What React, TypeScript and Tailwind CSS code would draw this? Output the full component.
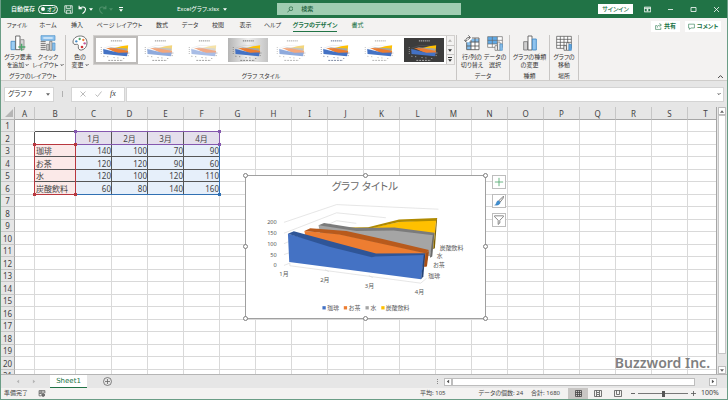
import React from 'react';

type Variant = {
  id: string;
  bg: string;
  ink: string;
  colors: string[];
  selected?: boolean;
};

const OFFICE = ['#4472c4', '#ed7d31', '#a5a5a5', '#ffc000'];
const PALE = ['#8faadc', '#f4a77c', '#c3c3c3', '#f3d57a'];

const chartStyles: Variant[] = [
  { id: 's1', bg: '#ffffff', ink: '#8a8a8a', colors: OFFICE, selected: true },
  { id: 's2', bg: '#ffffff', ink: '#8a8a8a', colors: PALE },
  { id: 's3', bg: '#ffffff', ink: '#8a8a8a', colors: ['#a9bde6', '#f0a987', '#d5d5d5', '#f5e2a8'] },
  { id: 's4', bg: 'linear-gradient(to right, #b5b5b5, #f0f0f0 50%, #c4c4c4)', ink: '#6a6a6a', colors: OFFICE },
  { id: 's5', bg: '#ffffff', ink: '#a5a5a5', colors: PALE },
  { id: 's6', bg: '#ffffff', ink: '#5b6a8a', colors: OFFICE },
  { id: 's7', bg: '#ffffff', ink: '#a5a5a5', colors: OFFICE },
  { id: 's8', bg: '#3c3c3c', ink: '#c8c8c8', colors: OFFICE },
];

const tabs = [
  'ファイル', 'ホーム', '挿入', 'ページ レイアウト', '数式', 'データ', '校閲', '表示', 'ヘルプ', 'グラフのデザイン', '書式',
];

const columns = 'ABCDEFGHIJKLMNOPQRST'.split('');
const rows = Array.from({ length: 21 }, (_, i) => i + 1);

const sheet: Record<number, (string | number)[]> = {
  2: ['', '', '1月', '2月', '3月', '4月'],
  3: ['', '珈琲', 140, 100, 70, 90],
  4: ['', 'お茶', 120, 120, 90, 60],
  5: ['', '水', 120, 100, 120, 110],
  6: ['', '炭酸飲料', 60, 80, 140, 160],
};

const Caret = ({ className = '' }: { className?: string }) => (
  <svg viewBox="0 0 8 5" className={`h-[3px] w-[4px] shrink-0 ${className}`} fill="currentColor">
    <path d="M0 0h8L4 5z" />
  </svg>
);

const Chevron = () => (
  <svg viewBox="0 0 8 5" className="inline h-[2px] w-[4px] mb-px ml-px" fill="none" stroke="currentColor" strokeWidth="2">
    <path d="M0 0l4 4 4-4" />
  </svg>
);

const ThumbChart = ({ style }: { style: Variant }) => (
  <svg viewBox="0 0 120 75" className="h-full w-full" style={{ background: style.bg }}>
    <path d="M44 9h34" stroke={style.ink} strokeWidth="3" strokeDasharray="4 2" />
    <path d="M20 32l28-9 50 3M20 38l28-8" stroke={style.ink} strokeWidth="0.8" fill="none" opacity="0.5" />
    <path d="M56 31l20-5 22-3-2 22z" fill={style.colors[3]} />
    <path d="M36 29l60 4-2 14z" fill={style.colors[2]} />
    <path d="M29 31l27 1 42 9-2 9-28-1z" fill={style.colors[1]} />
    <path d="M20 34l26 7 22 5 29-1-3 12-73-7z" fill={style.colors[0]} />
    <path d="M14 29v22" stroke={style.ink} strokeWidth="3" strokeDasharray="2 4" />
    <path d="M20 57l20 2M52 61l22 2M82 64h7M96 55h6M98 47h10" stroke={style.ink} strokeWidth="2" strokeDasharray="4 8" />
    <path d="M36 70h46" stroke={style.ink} strokeWidth="2.5" strokeDasharray="6 3" />
  </svg>
);

const AddElementIcon = () => (
  <svg viewBox="0 0 48 48" className="h-4 w-4" fill="none" strokeWidth="2.5">
    <path d="M3 19h13v25H3z" fill="#9ccdf3" stroke="#4a8fc7" />
    <path d="M17 3h13v41H17z" fill="#fff" stroke="#555" />
    <path d="M31 14h11v30H31z" fill="#d6d6d6" stroke="#888" />
    <path d="M35 26v21M25 36h21" stroke="#4ea66c" strokeWidth="4" />
  </svg>
);

const QuickLayoutIcon = () => (
  <svg viewBox="0 0 48 48" className="h-4 w-4" fill="none">
    <path d="M3 2h42v14H3z" fill="#8fc3ee" stroke="#4a8fc7" strokeWidth="2" />
    <path d="M10 9h28" stroke="#fff" strokeWidth="3" />
    <path d="M2 20h15M2 26h15M2 32h15M2 38h15M2 44h15" stroke="#555" strokeWidth="2.5" />
    <path d="M20 28h7v18h-7zM29 19h7v27h-7z" fill="#d6d6d6" stroke="#666" strokeWidth="2" />
    <path d="M38 24h7v22h-7z" fill="#8fc3ee" stroke="#4a8fc7" strokeWidth="2" />
  </svg>
);

const PaletteIcon = () => (
  <svg viewBox="0 0 48 48" className="h-4 w-4">
    <path
      d="M25 3C12 3 3 11 3 21c0 7 5 8 10 7 5-1 7 2 6 7-1 7 3 11 10 10 10-2 16-11 16-21C45 11 37 3 25 3z"
      fill="#fff"
      stroke="#555"
      strokeWidth="2.5"
    />
    <circle cx="13" cy="19" r="3.5" fill="#4a8fc7" />
    <circle cx="23" cy="12" r="3.5" fill="#4ea66c" />
    <circle cx="34" cy="15" r="3.5" fill="#ed7d31" />
    <circle cx="38" cy="25" r="3.5" fill="#c55a9a" />
    <circle cx="30" cy="36" r="4" fill="#d13438" />
  </svg>
);

const SwitchRowColIcon = () => (
  <svg viewBox="0 0 48 48" className="h-4 w-4" fill="none">
    <path d="M8 12h37v32H8z" fill="#fff" />
    <path d="M22 12h23v10H22zM8 22h13v22H8z" fill="#83bdec" />
    <path d="M8 22v22h37V9H24M8 33h37M21 15v29M33 9v35M16 21h29" stroke="#555" strokeWidth="2.5" />
    <path d="M5 20C5 10 9 7 18 7M13 1l6 6-6 7M0 14l5 6 6-6" stroke="#555" strokeWidth="2.5" />
  </svg>
);

const SelectDataIcon = () => (
  <svg viewBox="0 0 48 48" className="h-4 w-4" fill="none">
    <path d="M2 5h44v32H2z" fill="#fff" />
    <path d="M2 5h29v22H2z" fill="#5fa9e6" />
    <path d="M2 5h44v32H2zM2 16h44M2 27h44M16 5v32M31 5v32" stroke="#666" strokeWidth="2" />
    <path d="M24 32h7v14h-7zM32 21h7v25h-7z" fill="#fff" stroke="#666" strokeWidth="2" />
    <path d="M39 27h7v19h-7z" fill="#8fc3ee" stroke="#4a8fc7" strokeWidth="2" />
  </svg>
);

const ChartTypeIcon = () => (
  <svg viewBox="0 0 48 48" className="h-4 w-4" fill="none" strokeWidth="2.5">
    <path d="M5 20h12v25H5z" fill="#cfcfcf" stroke="#777" />
    <path d="M18 3h12v42H18z" fill="#fff" stroke="#555" />
    <path d="M31 12h12v33H31z" fill="#8fc3ee" stroke="#3f87c4" />
  </svg>
);

const MoveChartIcon = () => (
  <svg viewBox="0 0 48 48" className="h-4 w-4" fill="none">
    <path d="M2 4h44v36H2z" fill="#fff" />
    <path d="M2 4h44v36H2zM2 13h44M2 22h44M2 31h44M13 4v36M24 4v36M35 4v36" stroke="#555" strokeWidth="2.2" />
    <path d="M24 32h7v14h-7zM32 23h7v23h-7z" fill="#fff" stroke="#555" strokeWidth="2" />
    <path d="M39 28h7v18h-7z" fill="#5fa9e6" stroke="#3f87c4" strokeWidth="2" />
  </svg>
);

interface ToolProps {
  icon: React.ReactNode;
  lines: [string, string];
  menu?: boolean;
  className?: string;
}

const Tool: React.FC<ToolProps> = ({ icon, lines, menu, className = 'w-[30px]' }) => (
  <button type="button" className={`flex flex-col items-center ${className}`}>
    {icon}
    <span className="mt-[2px] whitespace-nowrap text-[6px] leading-[8px]">{lines[0]}</span>
    <span className="whitespace-nowrap text-[6px] leading-[8px]">
      {lines[1]}
      {menu && <Chevron />}
    </span>
  </button>
);

const Group: React.FC<{ label: string; className: string; children: React.ReactNode }> = ({ label, className, children }) => (
  <section className={`flex shrink-0 flex-col justify-between border-r border-[#c8c6c4] ${className}`}>
    <div className="flex items-start justify-center">{children}</div>
    <p className="text-center text-[6px] leading-[8px] whitespace-nowrap">{label}</p>
  </section>
);

const TitleBar = () => (
  <header className="relative flex h-[18px] shrink-0 items-center bg-[#217346] text-[6px] text-white">
    <label className="flex items-center gap-[3px] pl-[10px] font-medium whitespace-nowrap">
      自動保存
      <input type="checkbox" className="sr-only" />
      <span className="flex h-[9px] w-5 items-center gap-[2px] rounded-full border border-white px-[2px] text-[5px] leading-[7px]">
        <span className="h-[4px] w-[4px] shrink-0 rounded-full bg-white" />
        オフ
      </span>
    </label>
    <button type="button" aria-label="上書き保存" className="ml-[6px]">
      <svg viewBox="0 0 24 24" className="h-[9px] w-[9px]" fill="none" stroke="currentColor" strokeWidth="2">
        <path d="M2 2h20v20H5l-3-3zM6 2v7h12V2M7 22v-8h10v8" />
      </svg>
    </button>
    <button type="button" aria-label="元に戻す" className="ml-[5px] flex items-center gap-[2px]">
      <svg viewBox="0 0 24 24" className="h-[9px] w-[9px]" fill="none" stroke="currentColor" strokeWidth="3">
        <path d="M3 2v8h8M3 10C8 3 20 4 20 12c0 5-4 8-8 11" />
      </svg>
      <Caret />
    </button>
    <button type="button" aria-label="やり直し" className="ml-[5px] flex items-center gap-[2px] text-[#4d9069]">
      <svg viewBox="0 0 24 24" className="h-[9px] w-[9px]" fill="none" stroke="currentColor" strokeWidth="3">
        <path d="M21 2v8h-8M21 10C16 3 4 4 4 12c0 5 4 8 8 11" />
      </svg>
      <Caret />
    </button>
    <button type="button" aria-label="クイック アクセス" className="ml-[6px] flex flex-col items-center gap-px">
      <span className="h-px w-[4px] bg-white" />
      <Caret />
    </button>
    <h1 className="ml-[54px] flex items-center gap-[4px] whitespace-nowrap">
      Excelグラフ.xlsx <Caret />
    </h1>
    <div className="absolute left-[38%] flex h-3 w-[184px] items-center gap-2 bg-[#a0cdb2] pl-[10px] text-[#185c37]">
      <svg viewBox="0 0 24 24" className="h-[7px] w-[7px]" fill="none" stroke="currentColor" strokeWidth="2.5">
        <circle cx="15" cy="9" r="7" />
        <path d="M10 14l-9 9" />
      </svg>
      <input
        aria-label="検索"
        placeholder="検索"
        className="w-full bg-transparent text-[6px] font-medium outline-none placeholder:text-[#185c37]"
      />
    </div>
    <div className="ml-auto flex items-center pr-[7px]">
      <button type="button" className="mr-[11px] h-[10px] w-[35px] bg-white text-[6px] leading-[10px] font-medium text-[#217346]">
        サインイン
      </button>
      <div className="flex items-center gap-4">
        <button type="button" aria-label="リボンの表示オプション">
          <svg viewBox="0 0 24 20" className="h-[7px] w-[7px]" fill="none" stroke="currentColor" strokeWidth="3">
            <path d="M1 2h22v16H1zM1 6h22M12 16V9M8 12l4-3 4 3" />
          </svg>
        </button>
        <button type="button" aria-label="最小化">
          <svg viewBox="0 0 7 7" className="h-[7px] w-[7px]" stroke="currentColor" strokeWidth="0.8">
            <path d="M1 3.5h5" />
          </svg>
        </button>
        <button type="button" aria-label="元のサイズ">
          <svg viewBox="0 0 7 7" className="h-[7px] w-[7px]" fill="none" stroke="currentColor" strokeWidth="0.8">
            <path d="M1 1.5h5v4H1z" />
          </svg>
        </button>
        <button type="button" aria-label="閉じる">
          <svg viewBox="0 0 7 7" className="h-[7px] w-[7px]" stroke="currentColor" strokeWidth="0.8">
            <path d="M1 1l5 5M6 1L1 6" />
          </svg>
        </button>
      </div>
    </div>
  </header>
);

const TabBar = () => (
  <div className="flex h-4 shrink-0 items-center justify-between bg-[#f3f2f1]">
    <nav className="grid grid-cols-[32px_30px_28px_57px_28px_28px_28px_27px_27px_58px_27px] text-[6px]">
      {tabs.map((tab) => (
        <a
          key={tab}
          href="#"
          className={`flex justify-center whitespace-nowrap leading-[11px] ${
            tab === 'グラフのデザイン' ? 'font-bold text-[#217346]' : tab === '書式' ? 'text-[#217346]' : ''
          }`}
        >
          <span className={tab === 'グラフのデザイン' ? 'border-b border-[#217346]' : 'border-b border-transparent'}>{tab}</span>
        </a>
      ))}
    </nav>
    <div className="flex gap-[5px] pr-[6px] text-[6px] font-bold text-[#217346]">
      <button type="button" className="flex h-[11px] w-[29px] items-center justify-center gap-[2px] bg-white">
        <svg viewBox="0 0 24 24" className="h-[7px] w-[7px]" fill="none" stroke="currentColor" strokeWidth="2">
          <path d="M8 9H2v13h18v-7M8 16c0-7 5-9 13-9M15 1l7 6-7 6" />
        </svg>
        共有
      </button>
      <button type="button" className="flex h-[11px] w-9 items-center justify-center gap-[2px] whitespace-nowrap bg-white">
        <svg viewBox="0 0 24 24" className="h-[7px] w-[7px]" fill="none" stroke="currentColor" strokeWidth="2">
          <path d="M2 4h20v13H10l-5 5v-5H2z" />
        </svg>
        コメント
      </button>
    </div>
  </div>
);

const Ribbon = () => (
  <div className="flex h-[47px] shrink-0 border-b border-[#cfcdcb] bg-[#f3f2f1] pt-px">
    <Group label="グラフのレイアウト" className="w-[65px]">
      <Tool icon={<AddElementIcon />} lines={['グラフ要素', 'を追加']} menu />
      <Tool icon={<QuickLayoutIcon />} lines={['クイック', 'レイアウト']} menu />
    </Group>
    <Group label="グラフ スタイル" className="w-[391px]">
      <Tool icon={<PaletteIcon />} lines={['色の', '変更']} menu className="w-[25px]" />
      <div className="flex h-[30px] border border-[#d2d0ce] bg-white">
        {chartStyles.map((s) => (
          <button
            key={s.id}
            type="button"
            aria-label={s.id}
            className={`h-7 w-11 border-2 ${s.selected ? 'border-[#bdbbb9]' : 'border-transparent'}`}
          >
            <ThumbChart style={s} />
          </button>
        ))}
        <div className="flex w-[8px] flex-col divide-y divide-[#c8c6c4] border-l border-[#c8c6c4] bg-[#f3f2f1]">
          <button type="button" aria-label="上へ" className="flex flex-1 items-center justify-center text-[#b5b3b1]">
            <Caret className="rotate-180" />
          </button>
          <button type="button" aria-label="下へ" className="flex flex-1 items-center justify-center">
            <Caret />
          </button>
          <button type="button" aria-label="その他" className="flex flex-1 flex-col items-center justify-center gap-px">
            <span className="h-px w-[4px] bg-current" />
            <Caret />
          </button>
        </div>
      </div>
    </Group>
    <Group label="データ" className="w-[53px]">
      <Tool icon={<SwitchRowColIcon />} lines={['行/列の', '切り替え']} className="w-[24px]" />
      <Tool icon={<SelectDataIcon />} lines={['データの', '選択']} className="w-[22px]" />
    </Group>
    <Group label="種類" className="w-[40px]">
      <Tool icon={<ChartTypeIcon />} lines={['グラフの種類', 'の変更']} />
    </Group>
    <Group label="場所" className="w-[29px]">
      <Tool icon={<MoveChartIcon />} lines={['グラフの', '移動']} className="w-[26px]" />
    </Group>
    <button type="button" aria-label="リボンを折りたたむ" className="mt-auto mr-[4px] mb-[2px] ml-auto">
      <svg viewBox="0 0 8 5" className="h-[3px] w-[5px]" fill="none" stroke="currentColor" strokeWidth="1.5">
        <path d="M0 5l4-4 4 4" />
      </svg>
    </button>
  </div>
);

const FormulaBar = () => (
  <div className="flex h-[26px] shrink-0 items-center bg-[#e6e6e6] px-[3px]">
    <div className="flex h-[15px] w-[50px] items-center border border-[#d4d4d4] bg-white pr-[3px]">
      <input aria-label="名前ボックス" defaultValue="グラフ 7" className="w-full min-w-0 bg-transparent pl-[3px] text-[7px] outline-none" />
      <Caret className="text-[#666]" />
    </div>
    <span className="mx-2 h-[6px] w-px bg-[#b0b0b0]" />
    <div className="flex h-[15px] w-[54px] items-center justify-around border border-[#d4d4d4] bg-white px-1">
      <svg viewBox="0 0 12 12" className="h-[6px] w-[6px]" fill="none" stroke="#aaa" strokeWidth="1.6">
        <path d="M1 1l10 10M11 1L1 11" />
      </svg>
      <svg viewBox="0 0 12 12" className="h-[6px] w-[7px]" fill="none" stroke="#aaa" strokeWidth="1.6">
        <path d="M0 7l4 4 8-10" />
      </svg>
      <span className="font-['Liberation_Serif',serif] text-[8px] leading-none italic">fx</span>
    </div>
    <div className="ml-px flex h-[15px] flex-1 items-center border border-[#d4d4d4] bg-white pr-[2px]">
      <input aria-label="数式バー" className="w-full bg-transparent text-[8px] outline-none" />
      <Chevron />
    </div>
  </div>
);

const ChartDrawing = () => (
  <svg viewBox="0 0 720 432" className="h-full w-full" fontSize="18" fill="#595959">
    <text x="358" y="44" textAnchor="middle" fontSize="32" fill="#6a6a6a">グラフ タイトル</text>
    <g stroke="#d9d9d9" strokeWidth="2" fill="none">
      <path d="M112 141l160-54 310 14M112 174l160-62 150 15M112 206l160-70 60 8M112 239l18-6M112 272l18-7v8l398 53 18-15M237 285l12 6M370 303l12 6" />
    </g>
    {/* 炭酸飲料 */}
    <path d="M312 160l56 0 95-20 112-7-9 88-150 10z" fill="#ffc000" />
    <path d="M310 157l58-1 94-24 116-4-2 8-113 4-95 21-58 4z" fill="#b08a00" />
    <path d="M578 128l-3 7-9 87 5-2z" fill="#7f6000" />
    {/* 水 */}
    <path d="M217 150l17-1 98 14 113-2 122 15-10 68-330-46z" fill="#a5a5a5" />
    <path d="M217 150l17-7 96 15 118-1 122 16-4 7-121-14-113 1z" fill="#7b7b7b" />
    <path d="M570 173l-5 6-9 70 7-4z" fill="#6b6b6b" />
    {/* お茶 */}
    <path d="M174 167l107 10 152 33 115 26-5 40-60-4-300-60z" fill="#ed7d31" />
    <path d="M174 167l18-8 110 8 110 25 141 33-8 11-118-26-147-32z" fill="#b85a1c" />
    <path d="M553 228l-10 8-4 40 8-1z" fill="#a84f16" />
    {/* 珈琲 */}
    <path d="M124 176l126 33 136 32 153 -4-10 77-401-52z" fill="#4472c4" />
    <path d="M124 176l18-8 120 33 130 35 150-1-3 5-149 5-11 2-129-32z" fill="#2f5597" />
    <path d="M542 234l-5 8-8 72 7-8z" fill="#264478" />
    {[200, 150, 100, 50, 0].map((v, i) => (
      <text key={v} x="90" y={146 + i * 33} textAnchor="end" fontSize="17">
        {v}
      </text>
    ))}
    <text x="98" y="305">1月</text>
    <text x="222" y="321">2月</text>
    <text x="358" y="340">3月</text>
    <text x="510" y="360">4月</text>
    <text x="586" y="225">炭酸飲料</text>
    <text x="577" y="249">水</text>
    <text x="566" y="277">お茶</text>
    <text x="551" y="311">珈琲</text>
    <path d="M229 396h10v10h-10z" fill="#4472c4" />
    <path d="M294 396h10v10h-10z" fill="#ed7d31" />
    <path d="M360 396h10v10h-10z" fill="#a5a5a5" />
    <path d="M408 396h10v10h-10z" fill="#ffc000" />
    <text x="244" y="407">珈琲</text>
    <text x="309" y="407">お茶</text>
    <text x="375" y="407">水</text>
    <text x="422" y="407">炭酸飲料</text>
  </svg>
);

const handles = [
  'left-[-3px] top-[-3px]', 'left-[117px] top-[-3px]', 'right-[-3px] top-[-3px]',
  'left-[-3px] top-[68px]', 'right-[-3px] top-[68px]',
  'left-[-3px] bottom-[-3px]', 'left-[117px] bottom-[-3px]', 'right-[-3px] bottom-[-3px]',
];

const ChartObject = () => (
  <div className="absolute top-[68px] left-[244px] h-[144px] w-[241px] border border-[#a0a0a0] bg-white">
    <ChartDrawing />
    {handles.map((pos) => (
      <span key={pos} className={`absolute h-[5px] w-[5px] rounded-full border border-[#7f7f7f] bg-white ${pos}`} />
    ))}
    <div className="absolute top-[-1px] left-[246px] flex flex-col gap-[5px]">
      <button type="button" aria-label="グラフ要素" className="h-[14px] w-[14px] border border-[#bdbdbd] bg-white p-px">
        <svg viewBox="0 0 12 12" stroke="#4ea66c" strokeWidth="1"><path d="M6 1v10M1 6h10" /></svg>
      </button>
      <button type="button" aria-label="グラフ スタイル" className="h-[14px] w-[14px] border border-[#bdbdbd] bg-white p-px">
        <svg viewBox="0 0 36 36">
          <path d="M34 1L18 16l5 5L35 5z" fill="#fff" stroke="#444" strokeWidth="2.5" />
          <path d="M17 17l6 6c-2 8-10 11-21 10 6-3 5-6 7-10 2-5 5-6 8-6z" fill="#3f8fd0" stroke="#2b6ba5" />
        </svg>
      </button>
      <button type="button" aria-label="グラフ フィルター" className="h-[14px] w-[14px] border border-[#bdbdbd] bg-white p-px">
        <svg viewBox="0 0 36 36" fill="none" stroke="#555" strokeWidth="2.5">
          <path d="M2 3h32v3L21 19v10l-6 5V19L2 6z" />
        </svg>
      </button>
    </div>
  </div>
);

const RangeBox: React.FC<{ box: string; dot: string }> = ({ box, dot }) => (
  <div className={`pointer-events-none absolute border ${box}`}>
    {['-left-[2px] -top-[2px]', '-right-[2px] -top-[2px]', '-left-[2px] -bottom-[2px]', '-right-[2px] -bottom-[2px]'].map((pos) => (
      <span key={pos} className={`absolute h-[3px] w-[3px] ${dot} ${pos}`} />
    ))}
  </div>
);

const cellClass = (row: number, col: number) => {
  const inTable = row >= 2 && row <= 6 && col >= 1 && col <= 5;
  if (!inTable) {
    // gridlines turn dark along the edges that touch the bordered range
    const right = row >= 2 && row <= 6 && col === 0 ? 'border-r-[#555]' : 'border-r-[#d9d9d9]';
    const bottom = row === 1 && col >= 1 && col <= 5 ? 'border-b-[#555]' : 'border-b-[#d9d9d9]';
    return `${right} ${bottom}`;
  }
  if (row === 2) return 'border-[#555] text-center';
  return col === 1 ? 'border-[#555] pl-px text-left' : 'border-[#555] text-right';
};

const Sheet = () => (
  <div className="flex min-h-0 flex-1 bg-[#e6e6e6]">
    <div className="relative min-w-0 flex-1 overflow-hidden border-r border-[#a6a6a6] bg-white">
      <div className="pointer-events-none absolute top-[25px] left-[75px] h-[13px] w-36 bg-[#e4dfec]" />
      <div className="pointer-events-none absolute top-[38px] left-[34px] h-[49px] w-[41px] bg-[#fbe9e8]" />
      <div className="pointer-events-none absolute top-[38px] left-[75px] h-[49px] w-36 bg-[#e6effa]" />
      <table className="relative w-full min-w-[723px] table-fixed border-separate border-spacing-0 text-[8px] leading-[11px] text-[#444]">
        <colgroup>
          <col className="w-[14px]" />
          <col className="w-[20px]" />
          <col className="w-[41px]" />
          {columns.slice(2, -1).map((c) => (
            <col key={c} className="w-[36px]" />
          ))}
          <col />
        </colgroup>
        <thead>
          <tr className="h-[13px] bg-[#e6e6e6]">
            <th className="border-r border-b border-[#b5b5b5] p-0">
              <svg viewBox="0 0 9 9" className="ml-auto h-[9px] w-[9px]" fill="#b5b5b5">
                <path d="M8 0v8H0z" />
              </svg>
            </th>
            {columns.map((c) => (
              <th key={c} className="border-r border-b border-r-[#c6c6c6] border-b-[#a6a6a6] p-0 font-normal">
                {c}
              </th>
            ))}
          </tr>
        </thead>
        <tbody>
          {rows.map((r) => (
            <tr key={r} className={r % 2 ? 'h-[12px]' : 'h-[13px]'}>
              <th className="border-r border-b border-r-[#a6a6a6] border-b-[#c6c6c6] bg-[#e6e6e6] p-0 font-normal">{r}</th>
              {columns.map((c, i) => (
                <td key={c} className={`border-r border-b p-0 whitespace-nowrap ${cellClass(r, i)}`}>
                  {sheet[r]?.[i]}
                </td>
              ))}
            </tr>
          ))}
        </tbody>
      </table>
      <RangeBox box="top-[37px] left-[74px] h-[51px] w-[145px] border-[#3070b3]" dot="bg-[#3070b3]" />
      <RangeBox box="top-[24px] left-[74px] h-[14px] w-[145px] border-[#8457ae]" dot="bg-[#8457ae]" />
      <RangeBox box="top-[37px] left-[33px] h-[51px] w-[42px] border-[#b8373f]" dot="bg-[#b8373f]" />
      <ChartObject />
      <p className="pointer-events-none absolute right-[6px] bottom-px font-['Noto_Sans',sans-serif] text-[14px] leading-5 font-semibold text-[#7f7f7f]">
        Buzzword Inc.
      </p>
    </div>
    <div className="flex w-[10px] flex-col px-px text-[#666]">
      <button type="button" aria-label="上にスクロール" className="flex h-2 items-center justify-center border border-[#bdbdbd] bg-white">
        <Caret className="rotate-180" />
      </button>
      <div className="mb-3 flex-1 border border-[#c6c6c6] bg-white" />
      <button type="button" aria-label="下にスクロール" className="flex h-2 items-center justify-center border border-[#bdbdbd] bg-white">
        <Caret />
      </button>
    </div>
  </div>
);

const SheetTabs = () => (
  <div className="flex h-[14px] shrink-0 border-t border-[#b5b5b5] bg-[#e6e6e6]">
    <div className="flex w-[49px] items-center justify-center gap-3 text-[#b5b5b5]">
      <Caret className="rotate-90" />
      <Caret className="-rotate-90" />
    </div>
    <button type="button" className="h-[13px] w-[37px] border-b border-[#217346] bg-white text-[7px] leading-3 text-[#217346] font-['DejaVu_Sans',sans-serif]">
      Sheet1
    </button>
    <button type="button" aria-label="新しいシート" className="ml-4">
      <svg viewBox="0 0 9 9" className="h-[9px] w-[9px]" fill="none" stroke="#666" strokeWidth="0.8">
        <circle cx="4.5" cy="4.5" r="4" />
        <path d="M4.5 2v5M2 4.5h5" />
      </svg>
    </button>
    <div className="ml-auto flex w-[40%] items-center pr-[10px] text-[#555]">
      <span className="h-[5px] w-px border-l border-dotted border-[#888]" />
      <button type="button" aria-label="左にスクロール" className="ml-[6px] flex h-2 w-2 items-center justify-center border border-[#bdbdbd] bg-white">
        <Caret className="rotate-90" />
      </button>
      <div className="mr-[14px] h-2 flex-1 border border-[#bdbdbd] bg-white" />
      <button type="button" aria-label="右にスクロール" className="flex h-2 w-2 items-center justify-center border border-[#bdbdbd] bg-white">
        <Caret className="-rotate-90" />
      </button>
    </div>
  </div>
);

const StatusBar = () => (
  <footer className="flex h-3 shrink-0 items-center border-b border-[#6b9d86] bg-[#f3f2f1] pl-[3px] text-[6px] text-[#444] whitespace-nowrap">
    <span>準備完了</span>
    <svg viewBox="0 0 24 24" className="ml-[10px] h-[7px] w-[8px]" fill="none" stroke="#555" strokeWidth="2.5">
      <path d="M2 2h20v9M2 2v18h8M2 7h20M2 12h9M9 2v10" />
      <circle cx="16" cy="17" r="5" fill="#777" />
    </svg>
    <div className="ml-auto flex items-center">
      <span className="mr-[33px]">平均: 105</span>
      <span className="mr-2">データの個数: 24</span>
      <span className="mr-2">合計: 1680</span>
      <button type="button" aria-label="標準" className="flex h-[11px] w-5 items-center justify-center bg-[#c8c6c4]">
        <svg viewBox="0 0 7 7" className="h-[7px] w-[7px]" fill="none" stroke="#444" strokeWidth="0.8">
          <path d="M.5.5h6v6h-6zM.5 2.5h6M.5 4.5h6M2.5.5v6M4.5.5v6" />
        </svg>
      </button>
      <button type="button" aria-label="ページ レイアウト" className="flex w-5 justify-center">
        <svg viewBox="0 0 8 7" className="h-[7px] w-[8px]" fill="none" stroke="#555" strokeWidth="0.8">
          <path d="M.5.5h7v6h-7zM2.5.5v6M5.5.5v6M3 2.5h2M3 4.5h2" />
        </svg>
      </button>
      <button type="button" aria-label="改ページ プレビュー" className="flex w-5 justify-center">
        <svg viewBox="0 0 8 7" className="h-[7px] w-[8px]" fill="none" stroke="#555" strokeWidth="0.8">
          <path d="M.5.5h7v6h-7zM2.5.5v4h3v-4" />
        </svg>
      </button>
      <span className="ml-[3px] h-px w-[4px] bg-[#666]" />
      <input
        type="range"
        aria-label="ズーム"
        className="mx-[3px] h-px w-[50px] appearance-none bg-[#777] [&::-webkit-slider-thumb]:h-[6px] [&::-webkit-slider-thumb]:w-[3px] [&::-webkit-slider-thumb]:appearance-none [&::-webkit-slider-thumb]:bg-[#555]"
      />
      <svg viewBox="0 0 5 5" className="h-[5px] w-[5px]" stroke="#555" strokeWidth="0.8">
        <path d="M2.5 0v5M0 2.5h5" />
      </svg>
      <span className="w-[31px] pl-[5px] text-[7px]">100%</span>
    </div>
  </footer>
);

const App: React.FC = () => (
  <div
    lang="ja"
    className="flex h-screen flex-col overflow-hidden border-x border-[#6b9d86] bg-[#e6e6e6] font-['Noto_Sans','Noto_Sans_CJK_JP',sans-serif] text-[#333] [font-feature-settings:'palt']"
  >
    <TitleBar />
    <TabBar />
    <Ribbon />
    <FormulaBar />
    <Sheet />
    <SheetTabs />
    <StatusBar />
  </div>
);

export default App;
